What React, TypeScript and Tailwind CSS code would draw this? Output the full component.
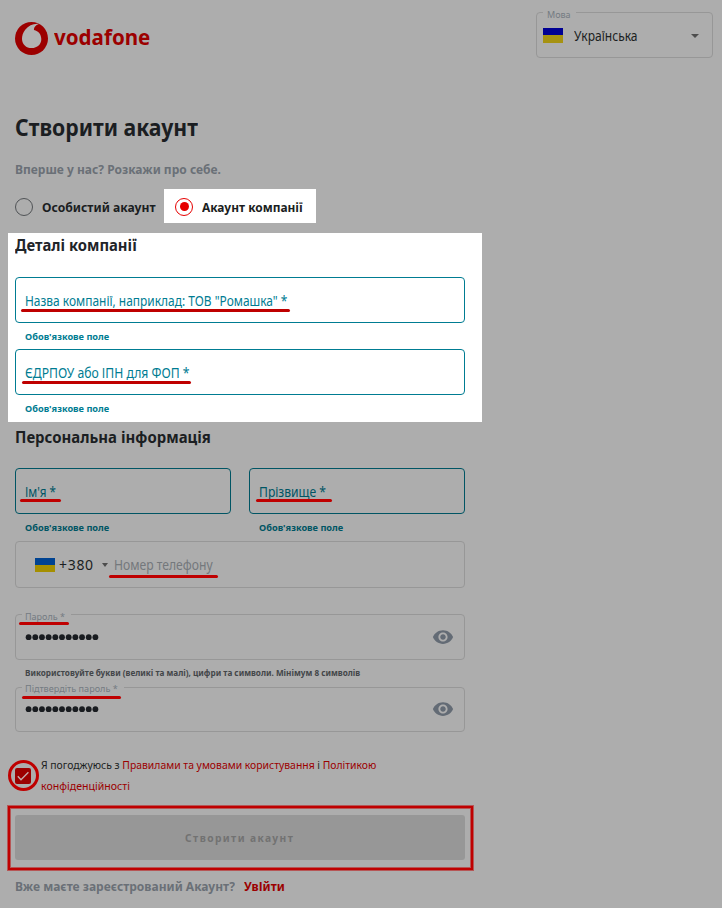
import type { ReactNode } from "react";

function Underline({ className }: { className: string }) {
  return <span className={`absolute h-[3px] rounded-full bg-[#bf0000] ${className}`} />;
}

function Text({ className = "", children }: { className?: string; children: ReactNode }) {
  return <span className={`inline-block origin-left whitespace-nowrap ${className}`}>{children}</span>;
}

function Hint() {
  return (
    <div className="flex h-[26px] items-center pl-2.5 pt-0.5 text-[9.5px] font-bold">
      <Text className="scale-x-[0.97]">Обов'язкове поле</Text>
    </div>
  );
}

function Field({ className, children }: { className: string; children: ReactNode }) {
  return <div className={`relative flex h-[46px] items-center rounded border pl-[9px] text-[14px] ${className}`}>{children}</div>;
}

function Eye({ className }: { className: string }) {
  return (
    <svg viewBox="0 0 24 24" className={`absolute right-[10px] size-[22px] fill-[#636b75] ${className}`}>
      <path d="M12 4.5C7 4.5 2.73 7.61 1 12c1.73 4.39 6 7.5 11 7.5s9.27-3.11 11-7.5c-1.73-4.39-6-7.5-11-7.5zM12 17c-2.76 0-5-2.24-5-5s2.24-5 5-5 5 2.24 5 5-2.24 5-5 5zm0-8c-1.66 0-3 1.34-3 3s1.34 3 3 3 3-1.34 3-3-1.34-3-3-3z" />
    </svg>
  );
}

function Dots() {
  return (
    <svg viewBox="0 0 74 8" className="h-2 w-[74px] fill-[#191c20]">
      {Array.from({ length: 11 }, (_, i) => (
        <circle key={i} cx={3.6 + i * 6.68} cy="4.2" r="2.9" />
      ))}
    </svg>
  );
}

export default function App() {
  return (
    <main className="h-[908px] w-[722px] overflow-hidden bg-[#adadad] font-['Noto_Sans','Open_Sans',sans-serif] text-[#1b1e22]">
      <header className="flex h-[106px] items-start justify-between pl-[15px] pr-[9px] pt-3">
        <div className="flex items-center pt-[9px]">
          <svg viewBox="0 0 33 33" className="size-[33px]">
            <circle cx="16.5" cy="16.5" r="16.5" fill="#9c0000" />
            <path d="M23.8 1.9C18.8 1.3 13.5 3.5 10.2 7.7C8 10.5 6.9 13.8 7 17C7.2 22.5 11.3 26.2 16.8 26.1C22.4 26 26.4 22.2 26.3 17C26.2 12.2 23.4 9 19 8C18.7 5.4 20.7 2.9 23.8 1.9Z" fill="#b2b2b2" />
          </svg>
          <div className="h-[34px] pl-[6px] text-[22px] font-bold leading-[31px] text-[#9c0000]">
            <Text className="scale-x-[0.935]">vodafone</Text>
          </div>
        </div>
        <div className="relative flex h-[46px] w-[177px] items-center rounded border border-[#979797] pl-[6px] text-[14px]">
          <span className="absolute left-[6px] top-[-4px] flex h-3 w-[33px] items-center bg-[#adadad] pl-1 text-[9px] text-[#747b82]">
            <Text>Мова</Text>
          </span>
          <span className="flex h-[15px] w-5 flex-col">
            <i className="h-[7px] bg-[#000093]" />
            <i className="h-[8px] bg-[#a69211]" />
          </span>
          <Text className="ml-[10.5px] scale-x-[0.86]">Українська</Text>
          <i className="absolute right-[13px] top-[21px] border-x-[4.5px] border-t-[4.5px] border-x-transparent border-t-[#4d4d4d]" />
        </div>
      </header>
      <h1 className="flex h-[42px] items-center pl-[15px] text-[24px] font-bold">
        <Text className="scale-x-[0.884]">Створити акаунт</Text>
      </h1>
      <p className="flex h-[41px] items-center pl-[15px] pt-0.5 text-[13px] font-bold text-[#6a7077]">
        <Text className="scale-x-[0.924]">Вперше у нас? Розкажи про себе.</Text>
      </p>
      <div className="flex h-[44px] items-start text-[13px] font-bold">
        <div className="flex h-[35px] w-[164px] items-center pl-[15px]">
          <span className="size-[18px] shrink-0 rounded-full border border-[#505356]" />
          <Text className="ml-[8.5px] mt-0.5 scale-x-[0.934]">Особистий акаунт</Text>
        </div>
        <div className="flex h-[34px] w-[152px] items-center bg-white pl-[11px] pt-px">
          <span className="flex size-[18px] shrink-0 items-center justify-center rounded-full border border-[#e60000]">
            <i className="size-[9px] rounded-full bg-[#e60000]" />
          </span>
          <Text className="ml-[9px] mt-0.5 scale-x-[0.918]">Акаунт компанії</Text>
        </div>
      </div>
      <section className="ml-2 h-[189px] w-[474px] bg-white pl-[7px] pr-[17px] text-[#007c92]">
        <h2 className="flex h-[44px] items-start text-[16px] font-bold leading-6 text-[#1f2429]">
          <Text className="scale-x-[0.926]">Деталі компанії</Text>
        </h2>
        <Field className="border-[#007c92]">
          <Text className="scale-x-[0.853]">Назва компанії, наприклад: ТОВ "Ромашка" *</Text>
          <Underline className="left-[5px] top-[31px] w-[269px]" />
        </Field>
        <Hint />
        <Field className="border-[#007c92]">
          <Text className="scale-x-[0.87]">ЄДРПОУ або ІПН для ФОП *</Text>
          <Underline className="left-[6px] top-[31px] w-[169px]" />
        </Field>
        <Hint />
      </section>
      <section className="w-[465px] pl-[15px]">
        <h2 className="h-[46px] text-[16px] font-bold leading-[31px]">
          <Text className="scale-x-[0.933]">Персональна інформація</Text>
        </h2>
        <div className="grid grid-cols-2 gap-[18px] text-[#005564]">
          <div>
            <Field className="border-[#005564]">
              <Text className="scale-x-[0.83]">Ім'я *</Text>
              <Underline className="left-[4px] top-[30px] w-[41px]" />
            </Field>
            <Hint />
          </div>
          <div>
            <Field className="border-[#005564]">
              <Text className="scale-x-[0.865]">Прізвище *</Text>
              <Underline className="left-[6px] top-[30px] w-[76px]" />
            </Field>
            <Hint />
          </div>
        </div>
        <div className="relative mt-px flex h-[47px] items-center rounded border border-[#979797] pl-[19px] text-[14px]">
          <span className="flex h-[14px] w-5 flex-col">
            <i className="h-[7px] bg-[#004391]" />
            <i className="h-[7px] bg-[#a58f00]" />
          </span>
          <Text className="ml-1 w-[38px] text-[14px] tracking-[0.7px]">+380</Text>
          <i className="ml-[5px] border-x-[3.5px] border-t-[4px] border-x-transparent border-t-[#4d4d4d]" />
          <Text className="ml-[5.5px] scale-x-[0.867] text-[#74787c]">Номер телефону</Text>
          <Underline className="left-[93px] top-[33px] w-[109px]" />
        </div>
        <div className="pt-[26px]">
          <Field className="border-[#979797]">
            <span className="absolute left-[6px] top-[-5px] flex h-[14px] w-[49px] items-center bg-[#adadad] pl-[3px] text-[9px] text-[#747b82]">
              <Text>Пароль *</Text>
            </span>
            <Underline className="left-[3px] top-[7px] w-[50px]" />
            <Dots />
            <Eye className="top-[11px]" />
          </Field>
          <p className="flex h-[27px] items-center pl-2.5 text-[9.5px] font-bold text-[#434649]">
            <Text className="scale-x-[0.859]">Використовуйте букви (великі та малі), цифри та символи. Мінімум 8 символів</Text>
          </p>
          <div className="relative flex h-[45px] items-center rounded border border-[#979797] pb-px pl-[9px]">
            <span className="absolute left-[6px] top-[-6px] flex h-[14px] w-[102px] items-center bg-[#adadad] pl-[3px] text-[9px] text-[#747b82]">
              <Text className="scale-x-[1.01]">Підтвердіть пароль *</Text>
            </span>
            <Underline className="left-[6px] top-[8px] w-[99px]" />
            <Dots />
            <Eye className="top-[10px]" />
          </div>
        </div>
      </section>
      <div className="flex h-[74px] items-start pl-[7.5px] pt-[22px]">
        <span className="mt-[6px] flex size-[31px] shrink-0 items-center justify-center rounded-full border-[3px] border-[#bf0000]">
          <svg viewBox="0 0 16 16" className="size-4 shrink-0 fill-none stroke-[#c5b0b0] stroke-[1.3]">
            <rect width="16" height="16" rx="2" className="fill-[#9c0000] stroke-none" />
            <path d="M2.8 8.2L6 11.7L13.4 4.3" />
          </svg>
        </span>
        <p className="ml-[2.5px] flex flex-col items-start text-[11.5px] leading-[21px] text-[#1b1e22]">
          <Text className="scale-x-[0.903]">
            Я погоджуюсь з <a className="text-[#9c0000]">Правилами та умовами користування</a> і <a className="text-[#9c0000]">Політикою</a>
          </Text>
          <Text className="scale-x-[0.92] text-[#9c0000]">конфіденційності</Text>
        </p>
      </div>
      <div className="ml-2 flex h-16 w-[465px] items-start border-2 border-[#bf0000] pl-[5px] pt-[7px] shadow-[0_0_0_1px_#bf000080,inset_0_0_0_1px_#bf000080]">
        <button className="flex h-[45px] w-[450px] items-center justify-center rounded-[3px] bg-[#979797] pt-0.5 text-[11px] font-bold tracking-[1.5px] text-[#727272]">
          <span className="scale-x-[0.93]">Створити акаунт</span>
        </button>
      </div>
      <footer className="flex h-[33px] items-center pl-[15px] text-[13px] font-bold text-[#6a7077]">
        <Text className="w-[229px] scale-x-[0.924]">Вже маєте зареєстрований Акаунт?</Text>
        <Text className="scale-x-[0.92] text-[#9c0000]">УвІйти</Text>
      </footer>
    </main>
  );
}
